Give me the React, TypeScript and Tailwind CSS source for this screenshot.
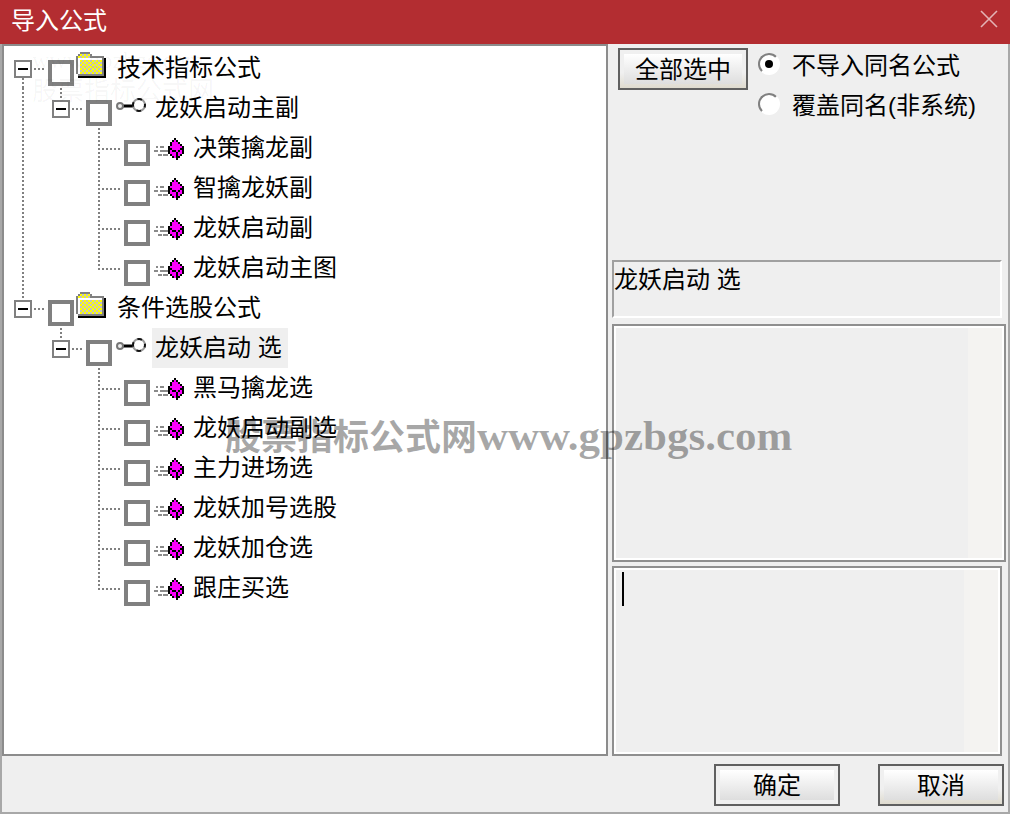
import React from "react";

type Branch = {
  label: string;
  depth: 0 | 1 | 2;
  last?: boolean;
  selected?: boolean;
  trunk?: boolean;
};

const rows: Branch[] = [
  { label: "技术指标公式", depth: 0, trunk: true },
  { label: "龙妖启动主副", depth: 1, trunk: true },
  { label: "决策擒龙副", depth: 2, trunk: true },
  { label: "智擒龙妖副", depth: 2, trunk: true },
  { label: "龙妖启动副", depth: 2, trunk: true },
  { label: "龙妖启动主图", depth: 2, trunk: true, last: true },
  { label: "条件选股公式", depth: 0, last: true },
  { label: "龙妖启动 选", depth: 1, selected: true },
  { label: "黑马擒龙选", depth: 2 },
  { label: "龙妖启动副选", depth: 2 },
  { label: "主力进场选", depth: 2 },
  { label: "龙妖加号选股", depth: 2 },
  { label: "龙妖加仓选", depth: 2 },
  { label: "跟庄买选", depth: 2, last: true },
];

const dotsV =
  "w-[2px] bg-[repeating-linear-gradient(to_bottom,#808080_0px,#808080_2px,transparent_2px,transparent_4px)]";
const dotsH =
  "h-[2px] bg-[repeating-linear-gradient(to_right,#808080_0px,#808080_2px,transparent_2px,transparent_4px)]";

/* One 38px indent column: optional stem above, stem below, arm to the right. */
function Guide({ up, down, arm }: { up: boolean; down: boolean; arm: boolean }) {
  return (
    <span className="grid h-10 w-[38px] shrink-0 grid-cols-[18px_2px_18px] grid-rows-[20px_20px]">
      {up && <span className={`col-start-2 row-start-1 h-5 ${dotsV}`} />}
      {down && <span className={`col-start-2 row-start-2 h-5 ${dotsV}`} />}
      {arm && <span className={`col-start-2 row-start-2 w-[22px] ${dotsH}`} />}
    </span>
  );
}

function Toggler({ up, down, name }: { up: boolean; down: boolean; name: string }) {
  return (
    <span className="grid h-10 w-[38px] shrink-0 grid-cols-[18px_2px_18px] grid-rows-[12px_18px_10px]">
      {up && <span className={`col-start-2 row-start-1 ${dotsV}`} />}
      <button
        type="button"
        aria-label={`折叠 ${name}`}
        className="col-span-3 col-start-1 row-start-2 flex size-[18px] items-center justify-center justify-self-center border-2 border-[#808080] bg-white"
      >
        <span className="h-[2px] w-[10px] shrink-0 bg-black" />
      </button>
      <span className={`col-start-3 row-start-2 ml-[10px] mt-2 w-[10px] ${dotsH}`} />
      {down && <span className={`col-start-2 row-start-3 ${dotsV}`} />}
    </span>
  );
}

function FolderIcon() {
  const checks: React.ReactElement[] = [];
  for (let y = 4; y <= 10; y++)
    for (let x = 2; x <= 12; x++)
      checks.push(
        <rect key={`${x}-${y}`} x={x} y={y} width="1" height="1" fill={(x + y) % 2 ? "#c3c3c3" : "#ffff00"} />
      );
  return (
    <svg viewBox="0 -2 16 20" className="h-10 w-8 shrink-0" shapeRendering="crispEdges" aria-hidden="true">
      <path d="M14 3h1v10H1v-1h13z" fill="#000" />
      <path d="M2 0h5v1h1v1h6v10H1v-1H0V2h1V1h1z" fill="#808080" />
      <path d="M2 1h5v1H2zM1 2h6v1H1z" fill="#c3c3c3" />
      <path d="M2 1h1v1H2zM4 1h1v1H4zM6 1h1v1H6zM1 2h1v1H1zM3 2h1v1H3zM5 2h1v1H5z" fill="#ffff00" />
      <path d="M1 3h12v8H1z" fill="#fff" />
      {checks}
    </svg>
  );
}

function KeyIcon() {
  return (
    <svg viewBox="0 0 32 40" className="h-10 w-8 shrink-0" fill="none" aria-hidden="true">
      <path d="M8 18h11" stroke="#000" strokeWidth="3" />
      <circle cx="6" cy="18" r="3" stroke="#777" strokeWidth="2" fill="#eee" />
      <circle cx="25" cy="17" r="6" stroke="#999" strokeWidth="2" fill="#fff" />
      <circle cx="25" cy="17" r="6" stroke="#111" strokeWidth="2" strokeDasharray="4.7 4.72" strokeDashoffset="2.35" />
    </svg>
  );
}

const gem = [
  "...#....",
  "..#M#...",
  ".#MMM#..",
  ".#MMMM#.",
  "#MMMMMM#",
  "##MMMM##",
  "#M##M#M#",
  "#MMM#MM#",
  ".#MM#M#.",
  "..#M##..",
  "....#...",
];

function GemIcon() {
  return (
    <svg viewBox="0 0 16 20" className="h-10 w-8 shrink-0" shapeRendering="crispEdges" aria-hidden="true">
      <path d="M2 9h1v1H2zM4 9h2v1H4zM1 11h2v1H1zM4 11h4v1H4zM3 13h2v1H3zM5.5 13H8v1H5.500z" fill="#8a8a8a" />
      {gem.flatMap((line, y) =>
        line.split("").map((c, x) =>
          c === "." ? null : (
            <rect key={`${x}-${y}`} x={x + 8} y={y + 5} width="1" height="1" fill={c === "#" ? "#000" : "#ff00ff"} />
          )
        )
      )}
    </svg>
  );
}

function TreeRow({ row, index }: { row: Branch; index: number }) {
  const id = `formula-${index}`;
  return (
    <li className="flex h-10">
      {row.depth === 0 && <Toggler name={row.label} up={index > 0} down={!row.last} />}
      {row.depth === 1 && (
        <>
          <Guide up={!!row.trunk} down={!!row.trunk} arm={false} />
          <Toggler name={row.label} up down={false} />
        </>
      )}
      {row.depth === 2 && (
        <>
          <Guide up={!!row.trunk} down={!!row.trunk} arm={false} />
          <Guide up={false} down={false} arm={false} />
          <Guide up down={!row.last} arm />
        </>
      )}
      <input
        id={id}
        type="checkbox"
        className="ml-1.5 mr-0.5 mt-3 size-[26px] shrink-0 appearance-none border-4 border-[#808080] bg-white checked:bg-[#808080]"
      />
      {row.depth === 0 && <FolderIcon />}
      {row.depth === 1 && <KeyIcon />}
      {row.depth === 2 && <GemIcon />}
      <label
        htmlFor={id}
        className={
          row.selected
            ? "ml-1.5 whitespace-nowrap bg-[#efefef] pl-[3px] pr-1.5 leading-10"
            : "ml-1.5 whitespace-nowrap pl-[3px] pr-1.5 leading-10"
        }
      >
        {row.label}
      </label>
    </li>
  );
}

function PushButton({ children, warm, wide }: { children: string; warm?: boolean; wide?: boolean }) {
  return (
    <button
      type="button"
      className={`h-[42px] shrink-0 border-2 border-[#606060] p-1 ${wide ? "w-[130px]" : "w-[126px]"} ${
        warm ? "bg-linear-to-b from-[#f0f0f0] from-60% to-[#dfdbcf]" : "bg-[#f0f0f0]"
      }`}
    >
      <span className="flex h-full items-center justify-center whitespace-nowrap bg-linear-to-b from-white to-[#dedede] pt-0.5">
        {children}
      </span>
    </button>
  );
}

function Choice({ label, checked }: { label: string; checked?: boolean }) {
  return (
    <label className="flex h-10 items-center gap-3 whitespace-nowrap">
      <span className="grid size-[22px] shrink-0 place-items-center">
        <input
          type="radio"
          name="duplicate"
          defaultChecked={checked}
          className="peer col-start-1 row-start-1 size-[22px] appearance-none rounded-full border-2 border-b-white border-l-[#808080] border-r-white border-t-[#808080] bg-white"
        />
        <span className="pointer-events-none col-start-1 row-start-1 size-2 rounded-full peer-checked:bg-black" />
      </span>
      <span className="pt-1">{label}</span>
    </label>
  );
}

export default function App() {
  return (
    <main className="relative flex min-h-screen flex-col bg-[#efefef] font-['Liberation_Sans','Noto_Sans_CJK_SC',sans-serif] text-2xl text-black">
      <header className="flex h-11 shrink-0 items-center justify-between bg-[#b32d31] pl-[11px] pr-3 text-white">
        <h1 className="h-11 leading-[42px]">导入公式</h1>
        <button type="button" aria-label="关闭" className="mb-1.5">
          <svg viewBox="0 0 18 18" className="size-[18px]" aria-hidden="true">
            <path d="M1 1l16 16M17 1L1 17" stroke="#e3b3b5" strokeWidth="1.6" />
          </svg>
        </button>
      </header>

      <div className="flex flex-1 flex-col border-2 border-t-0 border-[#a8a8a8]">
        <div className="flex flex-1">
          <section className="flex-1 border-2 border-[#8c8c8c] bg-white pt-0.5">
            <ul>
              {rows.map((row, i) => (
                <TreeRow key={row.label + i} row={row} index={i} />
              ))}
            </ul>
          </section>

          <section className="flex w-[400px] shrink-0 flex-col pl-1 pr-0.5">
            <div className="flex h-[216px] items-start pl-1.5">
              <div className="pt-1">
                <PushButton wide warm>
                  全部选中
                </PushButton>
              </div>
              <fieldset className="ml-2.5">
                <Choice label="不导入同名公式" checked />
                <Choice label="覆盖同名(非系统)" />
              </fieldset>
            </div>
            <p className="mr-1 h-[58px] border-2 border-b-white border-l-[#a0a0a0] border-r-white border-t-[#a0a0a0] leading-9">
              龙妖启动 选
            </p>
            <div className="mt-1.5 flex flex-1 justify-end border-2 border-[#8f8f8f] bg-[#efefef] outline-2 -outline-offset-4 outline-white">
              <div className="my-0.5 mr-0.5 w-[34px] bg-[#f4f3f1]" />
            </div>
            <div className="mr-1 mt-1 flex h-[190px] border-2 border-[#8f8f8f] bg-[#efefef] outline-2 -outline-offset-4 outline-white">
              <span className="ml-2 mt-1 h-[34px] w-[2px] bg-black" />
              <textarea
                aria-label="说明"
                className="min-w-0 flex-1 resize-none bg-transparent caret-transparent outline-none"
              />
              <div className="my-0.5 mr-0.5 w-[34px] bg-[#f4f3f1]" />
            </div>
          </section>
        </div>

        <footer className="flex justify-end gap-[38px] pb-1.5 pr-1 pt-2">
          <PushButton>确定</PushButton>
          <PushButton warm>取消</PushButton>
        </footer>
      </div>

      <div className="pointer-events-none absolute left-8 top-11 font-['Liberation_Serif','Noto_Sans_CJK_SC',serif] leading-8 text-black/4">
        <p>www.gpzbgs.com</p>
        <p className="text-[26px]">股票指标公式网</p>
      </div>
      <p className="pointer-events-none absolute left-[225px] top-[406px] whitespace-nowrap font-['Liberation_Serif','Noto_Sans_CJK_SC',serif] text-4xl leading-[60px] font-bold text-black/35">
        股票指标公式网<span className="text-[43px]">www.gpzbgs.com</span>
      </p>
    </main>
  );
}
